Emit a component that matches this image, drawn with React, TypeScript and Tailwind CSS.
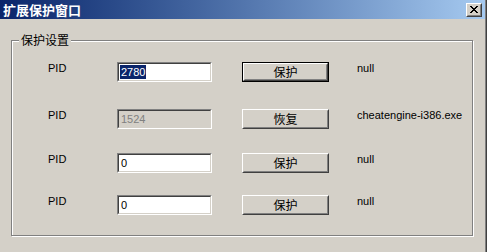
import React from "react";

const rows = [
  { value: "2780", selected: true, disabled: false, action: "保护", status: "null", isDefault: true },
  { value: "1524", selected: false, disabled: true, action: "恢复", status: "cheatengine-i386.exe", isDefault: false },
  { value: "0", selected: false, disabled: false, action: "保护", status: "null", isDefault: false },
  { value: "0", selected: false, disabled: false, action: "保护", status: "null", isDefault: false },
];

// spacing above each row, measured from the group box inner top
const rowGaps = ["mt-[21px]", "mt-[27px]", "mt-[24px]", "mt-[22px]"];

const ui = { fontFamily: '"Liberation Sans", "Noto Sans CJK SC", sans-serif' };
const cjk = { fontFamily: '"Noto Sans CJK SC", "Liberation Sans", sans-serif' };

function SunkenField({ value, selected, disabled }: { value: string; selected: boolean; disabled: boolean }) {
  return (
    <div className="w-[95px] h-[20px] border border-t-[#808080] border-l-[#808080] border-b-white border-r-white">
      <div
        className={`h-full border border-t-[#404040] border-l-[#404040] border-b-[#d4d0c8] border-r-[#d4d0c8] flex items-center pl-[1px] text-[11px] leading-[14px] ${
          disabled ? "bg-[#d4d0c8] text-[#808080]" : "bg-white text-black"
        }`}
        style={ui}
      >
        {selected ? <span className="bg-[#0a246a] text-white px-[1px]">{value}</span> : <span className="px-[1px]">{value}</span>}
      </div>
    </div>
  );
}

function RaisedButton({ label, isDefault }: { label: string; isDefault: boolean }) {
  const face = (
    <div className="h-full border border-t-white border-l-white border-b-[#404040] border-r-[#404040]">
      <div className="h-full border border-t-[#d4d0c8] border-l-[#d4d0c8] border-b-[#808080] border-r-[#808080] flex items-center justify-center text-[12px] leading-[14px] text-black" style={cjk}>
        {label}
      </div>
    </div>
  );
  return (
    <div className={`w-[87px] h-[20px] ${isDefault ? "border border-black" : ""}`}>{face}</div>
  );
}

export default function App() {
  return (
    <div className="w-[487px] h-[252px] bg-[#d4d0c8] border-r border-r-[#404040] overflow-hidden">
      <div className="h-full border-r border-r-[#808080] flex flex-col">
        {/* title bar */}
        <div className="h-[19px] shrink-0 flex items-center justify-between pl-[3px] pr-[3px] bg-gradient-to-r from-[#0a246a] to-[#a6caf0]">
          <span className="text-white font-bold text-[13px] leading-[15px]" style={cjk}>
            扩展保护窗口
          </span>
          <div className="w-[16px] h-[14px] border border-t-white border-l-white border-b-[#404040] border-r-[#404040] bg-[#d4d0c8]">
            <div className="h-full border border-t-[#d4d0c8] border-l-[#d4d0c8] border-b-[#808080] border-r-[#808080] flex items-center justify-center">
              <svg width="8" height="7" viewBox="0 0 8 7" shapeRendering="crispEdges">
                <path d="M0 0h2v1H0zM6 0h2v1H6zM1 1h2v1H1zM5 1h2v1H5zM2 2h4v1H2zM3 3h2v1H3zM2 4h4v1H2zM1 5h2v1H1zM5 5h2v1H5zM0 6h2v1H0zM6 6h2v1H6z" fill="#000" />
              </svg>
            </div>
          </div>
        </div>

        {/* group box */}
        <div className="relative ml-[11px] mt-[21px] w-[462px] h-[196px] border border-[#808080] shadow-[inset_1px_1px_0_#fff,1px_1px_0_#fff]">
          <span className="absolute left-[7px] top-[-9px] px-[2px] bg-[#d4d0c8] text-[12px] leading-[16px] text-black" style={cjk}>
            保护设置
          </span>
          {rows.map((row, i) => (
            <div key={i} className={`flex items-start pl-[36px] ${rowGaps[i]}`}>
              <span className="w-[69px] text-[11px] leading-[13px] text-black" style={ui}>
                PID
              </span>
              <SunkenField value={row.value} selected={row.selected} disabled={row.disabled} />
              <div className="ml-[30px]">
                <RaisedButton label={row.action} isDefault={row.isDefault} />
              </div>
              <span className="ml-[28px] text-[11px] leading-[13px] text-black" style={ui}>
                {row.status}
              </span>
            </div>
          ))}
        </div>
      </div>
    </div>
  );
}
